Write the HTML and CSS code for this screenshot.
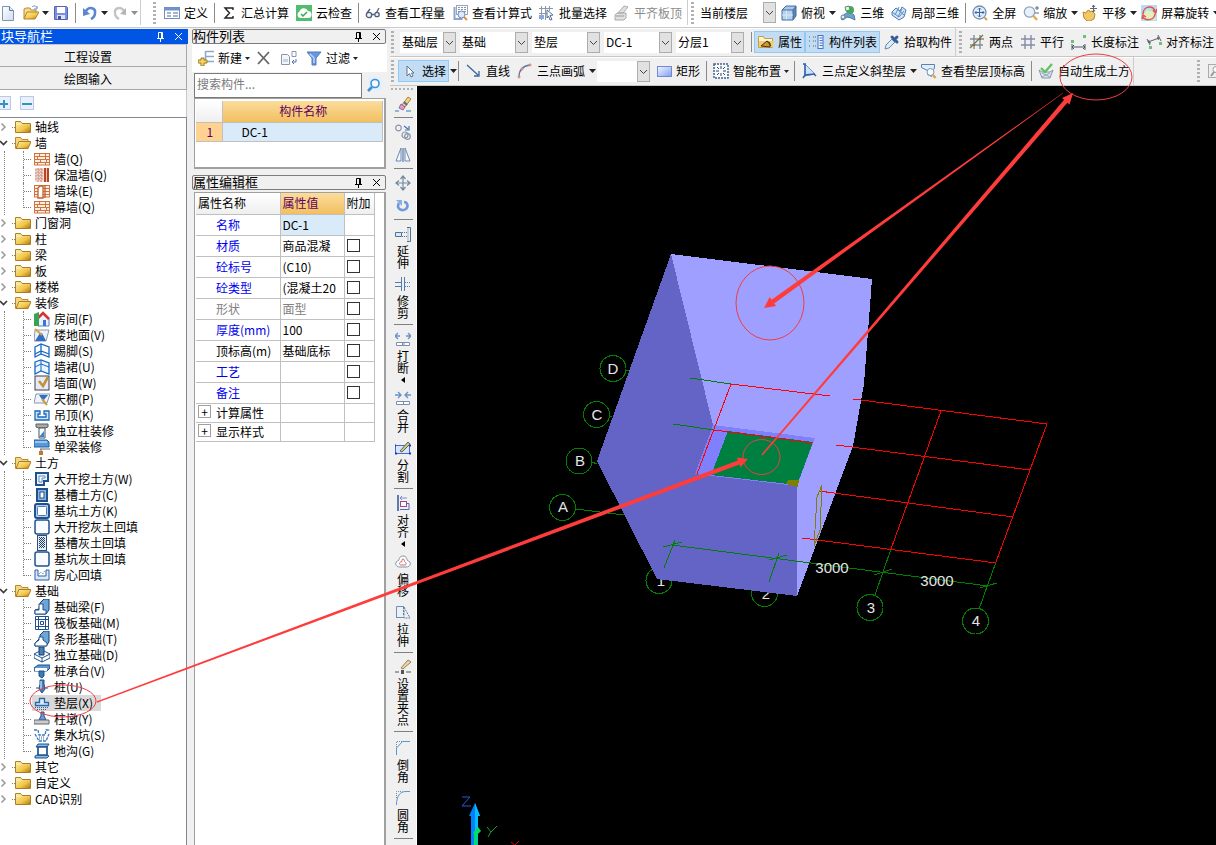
FILE: index.html
```html
<!DOCTYPE html>
<html lang="zh-CN">
<head>
<meta charset="utf-8">
<title>绘图输入</title>
<link rel="stylesheet" href="styles.css">
</head>
<body>
<svg class="sprite" aria-hidden="true">
  <defs>
    <linearGradient id="g-fold" x1="0" y1="0" x2="1" y2="1"><stop offset="0" stop-color="#fff0a8"/><stop offset=".6" stop-color="#f2c548"/><stop offset="1" stop-color="#a87410"/></linearGradient>
    <linearGradient id="g-blue" x1="0" y1="0" x2="1" y2="1"><stop offset="0" stop-color="#f4f8ff"/><stop offset="1" stop-color="#7f9ff0"/></linearGradient>
    <linearGradient id="g-page" x1="0" y1="0" x2="1" y2="1"><stop offset="0" stop-color="#fff"/><stop offset="1" stop-color="#cfdcf0"/></linearGradient>
  </defs>
  <symbol id="caret" viewBox="0 0 7 4"><path d="M0 0h7L3.500 4z" fill="#222"/></symbol>
  <symbol id="new" viewBox="0 0 16 16"><path d="M2.500 1.500h7l4 4v10h-11z" fill="url(#g-page)" stroke="#7d94b5"/><path d="M9.500 1.500v4h4" fill="#dce6f4" stroke="#5f7ba6"/></symbol>
  <symbol id="open" viewBox="0 0 16 16"><path d="M1 14V4l2-1h4l1 2h5v2" fill="#f5dc8c" stroke="#b98b2c"/><path d="M1 14l3-7h12l-4 7z" fill="url(#g-fold)" stroke="#b08428"/><path d="M9 2c2-2 4-1 5 1m0-2v3h-3" fill="none" stroke="#6d8fc4"/></symbol>
  <symbol id="save" viewBox="0 0 16 16"><path d="M1.500 1.500h12l1 1v12h-13z" fill="#7b8fe0" stroke="#5663b4"/><path d="M4 2h8v6H4z" fill="#fff"/><path d="M4 10h8v4H4z" fill="#dce4f8"/><path d="M5 11h3v3H5z" fill="#4552a0"/></symbol>
  <symbol id="undo" viewBox="0 0 16 16"><path d="M4 6C7 1 14 3 13 8c0 3-2 5-4 6" fill="none" stroke="#5c86cf" stroke-width="2.600"/><path d="M1 3v8l7-2z" fill="#5c86cf"/></symbol>
  <symbol id="redo" viewBox="0 0 16 16"><path d="M12 6C9 1 2 3 3 8c0 3 2 5 4 6" fill="none" stroke="#c4c4c4" stroke-width="2.400"/><path d="M14 3v7l-6-1z" fill="#b5b5b5"/></symbol>
  <symbol id="define" viewBox="0 0 16 16"><rect x=".5" y="2.500" width="15" height="11" fill="#fff" stroke="#6f8fc4"/><path d="M1 3h14v2.500H1z" fill="#6d93d6"/><path d="M3 8h4M3 11h4M9 8h5M9 11h5" stroke="#4f6791"/></symbol>
  <symbol id="sum" viewBox="0 0 16 16"><path d="M12 5V3H4l4.500 5L4 13h8v-2" fill="none" stroke="#222" stroke-width="1.400"/></symbol>
  <symbol id="cloud" viewBox="0 0 16 16"><rect width="16" height="16" fill="#52bd6c"/><path d="M4 13a3.500 3.500 0 0 1-.5-6.500A4.500 4.500 0 0 1 12 6a3.500 3.500 0 0 1 0 7z" fill="#fff"/><path d="M5 9l2 2 4-4" fill="none" stroke="#34a853" stroke-width="1.500"/></symbol>
  <symbol id="glasses" viewBox="0 0 16 16"><g fill="#eef2f8" stroke="#51607a" stroke-width="1.300"><circle cx="4" cy="10" r="2.700"/><circle cx="12" cy="9.500" r="2.200"/><path d="M6.500 9.500h3M2 8l3-4m6.500 3.500L14 3" fill="none"/></g></symbol>
  <symbol id="formula" viewBox="0 0 16 16"><rect x="4.500" y=".5" width="11" height="9" fill="#fff" stroke="#9aa3b8"/><path d="M6 2.500h8M6 4.500h8M6 6.500h8" stroke="#8593b0" stroke-dasharray="2 1"/><path d="M2.500 2v12h8" fill="none" stroke="#8ba2d4" stroke-width="2"/><circle cx="9.500" cy="9.500" r="3.500" fill="#dceaff" stroke="#7286ad"/><path d="M12 12l3 3" stroke="#d8953e" stroke-width="2"/></symbol>
  <symbol id="batch" viewBox="0 0 16 16"><path d="M0 3.500h14M0 8.500h11M2.500 1v14M6.500 1v14M10.500 1v5" stroke="#8c97ab"/><path d="M0 10h5v4H0z" fill="#8ba6dc"/><path d="M8 5l6 5-3 .5 2 4-2 .5-1.500-4L8 13z" fill="#fff" stroke="#506f9f"/></symbol>
  <symbol id="flat" viewBox="0 0 16 16"><path d="M1 10l2-2h9v5l-2 2H1zM4 8l6-7 4 1-5 6z" fill="#e0e0e0" stroke="#aaa"/><path d="M2 11h8" stroke="#999"/></symbol>
  <symbol id="cube" viewBox="0 0 16 16"><path d="M1 5l4-4h10l-3 4z" fill="#a7c6ec"/><path d="M1 5h11v10H1z" fill="#b8d3ee"/><path d="M12 5l3-4v10l-3 4z" fill="#5c86b8"/><path d="M1 5l4-4h10v10l-3 4H1zM1 5h11v10m0-10l3-4" fill="none" stroke="#416d9d"/><path d="M5.500 5.500v9M1 10h11" stroke="#d9e8f7"/></symbol>
  <symbol id="view3d" viewBox="0 0 16 16"><path d="M1 14c2-6 9-8 13-4l1 5-4-2-4-1-4 3z" fill="#6da2cf" stroke="#477aab"/><circle cx="10" cy="5" r="4" fill="#47a85b"/><path d="M5 2l4-1 1 4-4 1z" fill="#e4f2e8" stroke="#53916a"/><circle cx="3" cy="12" r="2" fill="#eee" stroke="#647fa3"/></symbol>
  <symbol id="part3d" viewBox="0 0 16 16"><path d="M1 7l4-4 4 3 2-4 4 3-2 7-5 3-7-5z" fill="#d4e6f8" stroke="#4a7bb0"/><path d="M4 10l4-8m-1 10l4-8M1 7l7 5 5-6M5 3l8 7" fill="none" stroke="#5f8fc3"/></symbol>
  <symbol id="full" viewBox="0 0 16 16"><circle cx="7.500" cy="7.500" r="6.500" fill="#e4edf8" stroke="#7990ae" stroke-width="1.300"/><path d="M7.500 3v9M3 7.500h9M6 4.500L7.500 3 9 4.500m-3 6L7.500 12 9 10.500M4.500 6L3 7.500 4.500 9m6-3L12 7.500 10.500 9" fill="none" stroke="#2f68ad"/><path d="M12.500 12.500L15 15" stroke="#d3a04a" stroke-width="2"/></symbol>
  <symbol id="zoomic" viewBox="0 0 16 16"><circle cx="6.500" cy="7" r="5.200" fill="#e8f0f8" stroke="#93a5bd" stroke-width="1.300"/><path d="M10.500 11l3.500 4" stroke="#e3ad45" stroke-width="2.400"/><path d="M12 3h4m-2-2v4m-2 3h4" stroke="#506d94"/></symbol>
  <symbol id="hand" viewBox="0 0 16 16"><path d="M1 7l3 1 1-2 2-1 1 2 2-1 3 3-1 5-4 2H5l-3-3z" fill="#f2c765" stroke="#b88c32"/><path d="M11.500 0v7M8 3.500h7M10 2l1.500-2L13 2m-3 4l1.500 1L13 5" fill="none" stroke="#5f6670"/></symbol>
  <symbol id="orbit" viewBox="0 0 16 16"><rect width="16" height="16" fill="#b6def0"/><path d="M1 12l5-7 6 2 3 8z" fill="#e5efba"/><path d="M2 9c0-9 12-9 12-2M14 9c-1 7-10 7-12 3M12 5l2.500 3L16 4M1 14l1-4 3 2" fill="none" stroke="#e6544a" stroke-width="1.500"/></symbol>
  <symbol id="props" viewBox="0 0 16 16"><path d="M.5 13.500v-11h5l1 2h8v9z" fill="#fff4cd" stroke="#c79e42"/><path d="M1 7h15l-1 6H1z" fill="#f0cf74"/><path d="M3 12l6-5 3 2v4zM9 7l4 5" fill="#d3962f" stroke="#3f3422"/></symbol>
  <symbol id="listic" viewBox="0 0 16 16"><path d="M0 3h2M4 3h3M0 7h2M4 7h3M0 12h2M4 12h3" stroke="#546277" stroke-dasharray="1 1"/><rect x="9" y="1.500" width="5" height="13" fill="#eef3ff" stroke="#4773c8"/><path d="M10.500 4h3M10.500 6.500h3M10.500 9h3M10.500 11.500h3" stroke="#4773c8"/></symbol>
  <symbol id="picker" viewBox="0 0 16 16"><path d="M1 15l1-4 6-6 3 3-6 6z" fill="#dcebfa" stroke="#678caf"/><path d="M8 3l5 5M10 6l3-3" stroke="#345f9a" stroke-width="3" stroke-linecap="round"/></symbol>
  <symbol id="twopt" viewBox="0 0 16 16"><path d="M1 5h14M1 11h13M5 1v14M11 1v14" stroke="#858b9b" stroke-width="1.400"/><path d="M1 14L14 1" stroke="#4f8d3c" stroke-width="1.200"/><path d="M4 10h2v2H4zm6-6h2v2h-2z" fill="#d24640"/></symbol>
  <symbol id="para" viewBox="0 0 16 16"><path d="M1 5h14M1 11h14M5 1v14M11 1v14" stroke="#858ba5" stroke-width="1.400"/></symbol>
  <symbol id="len" viewBox="0 0 16 16"><path d="M1 10v6m13-6v6M1 13h13M3 11l-2 2 2 2m9-4l2 2-2 2" fill="none" stroke="#4d5968"/><path d="M0 6h3v3H0zM12 1h3v3h-3z" fill="#6fc075"/></symbol>
  <symbol id="align" viewBox="0 0 16 16"><path d="M1 5l3 6M12 1l3 6M2 8l11-4M3 6L2 8l3 1m6-6l2 1-1 2" fill="none" stroke="#58616f"/><path d="M3 12h3v3H3zM13 8h3v3h-3z" fill="#6fc075"/></symbol>
  <symbol id="cursor" viewBox="0 0 16 16"><path d="M5 3v10l2.500-2.500L9 14l2-1-1.500-3H12z" fill="#fff" stroke="#5a7390"/></symbol>
  <symbol id="line" viewBox="0 0 16 16"><path d="M1 2l11 10M13 8v5H8" fill="none" stroke="#3b6797" stroke-width="1.300"/></symbol>
  <symbol id="arc" viewBox="0 0 16 16"><path d="M2 14C2 7 5 3 13 2" fill="none" stroke="#627b9e" stroke-width="1.300"/><g fill="#fff" stroke="#d4705f"><circle cx="2" cy="14" r="1"/><circle cx="5" cy="6" r="1"/><circle cx="13" cy="2" r="1"/></g></symbol>
  <symbol id="rect" viewBox="0 0 16 16"><rect x="1.500" y="3.500" width="14" height="10" fill="url(#g-blue)" stroke="#7189d5"/></symbol>
  <symbol id="smart" viewBox="0 0 16 16"><rect x="1" y="1" width="14" height="14" fill="#f7faff" stroke="#44638c" stroke-width="1.500" stroke-dasharray="2 1"/><path d="M8 3v3M8 10v3M3 8h3M10 8h3M4 4l2 2m4 4l2 2M12 4l-2 2m-4 4l-2 2" stroke="#33455f"/></symbol>
  <symbol id="slope" viewBox="0 0 16 16"><path d="M3 1v12l10-2z" fill="#cfe2fb" stroke="#6f97cf"/><path d="M1 1h3M3 1v12M1 15l2-3 9-1 2 2" fill="none" stroke="#3161a8" stroke-width="1.500"/></symbol>
  <symbol id="lookup" viewBox="0 0 16 16"><path d="M.5 1.500h13v4l-3 2v6l-4-2v-4l-6-3z" fill="#e0edfa" stroke="#5a81b1"/><circle cx="9.500" cy="9" r="3.500" fill="#f4faff" stroke="#8098b5"/><path d="M12 12l2.500 3" stroke="#e0a443" stroke-width="2.400"/></symbol>
  <symbol id="auto" viewBox="0 0 16 16"><path d="M1 7l3 8h8l3-8-3 2H4z" fill="#dbe5ee" stroke="#8297ab"/><path d="M4 10l8 4M12 10l-8 4" stroke="#96a7b6"/><path d="M3 5l4 4 7-8" fill="none" stroke="#5fc05e" stroke-width="2.200"/></symbol>
  <symbol id="ghost" viewBox="0 0 16 16"><rect x=".5" y="1.500" width="15" height="13" fill="#eee" stroke="#aaa"/><circle cx="8" cy="6.500" r="3" fill="#fff" stroke="#999"/><path d="M6 9l-3 4" stroke="#999" stroke-width="2"/></symbol>
  <symbol id="addrow" viewBox="0 0 16 16"><path d="M7.500 1v12M8 1.500h8M8 6.500h8M8 11.500h8" stroke="#8ea7c4" stroke-width="1.500"/><path d="M3 8h3v2h3v3H6v3H3v-3H0v-3h3z" fill="#f4d35f" stroke="#9c7a28"/></symbol>
  <symbol id="del" viewBox="0 0 16 16"><path d="M2 2l11 12M13 2L2 14" stroke="#666" stroke-width="1.800"/></symbol>
  <symbol id="copyrow" viewBox="0 0 16 16"><path d="M.5 4.500h6l2 2v8h-8z" fill="#f4f6fa" stroke="#8996ad"/><path d="M2 9h5v3H2z" fill="#c7d3e8"/><path d="M11 1.500h4v5h-4z" fill="#fff" stroke="#8996ad"/><path d="M15 9v3h-4m2-2l-2 2 2 2" fill="none" stroke="#5870b8"/></symbol>
  <symbol id="funnel" viewBox="0 0 16 16"><path d="M1 2h14L10 8v7H6V8z" fill="#6698dc" stroke="#5078bd"/><path d="M4 4l4 4v5" fill="none" stroke="#b9d5ff" stroke-width="1.500"/></symbol>
  <symbol id="find" viewBox="0 0 16 16"><rect x="2" width="14" height="14" fill="#e2f1fd"/><circle cx="9" cy="6.500" r="4" fill="#f4faff" stroke="#3e91d4" stroke-width="1.600"/><path d="M6 10l-4 4" stroke="#3e91d4" stroke-width="2.600"/></symbol>
  <symbol id="pin" viewBox="0 0 9 10"><path d="M2.500 6V.5h4V6M5.500 1v5M1 6.500h7M4.500 7v3" fill="none" stroke="currentColor"/></symbol>
  <symbol id="x" viewBox="0 0 9 9"><path d="M1 1l7 7M8 1L1 8" stroke="currentColor"/></symbol>
  <symbol id="plus" viewBox="0 0 14 14"><rect x=".5" y=".5" width="13" height="13" fill="#e9effb" stroke="#b9c7eb"/><path d="M7 4v8M3 8h8" stroke="#3292c3" stroke-width="2"/></symbol>
  <symbol id="minus" viewBox="0 0 14 14"><rect x=".5" y=".5" width="13" height="13" fill="#e9effb" stroke="#b9c7eb"/><path d="M2 8h10" stroke="#3292c3" stroke-width="2"/></symbol>
  <symbol id="shut" viewBox="0 0 8 10"><path d="M1.500 1.500L5 5 1.500 8.500" fill="none" stroke="#9b9b9b" stroke-width="1.600"/></symbol>
  <symbol id="down" viewBox="0 0 8 10"><path d="M0 3l3.500 3.500L7 3" fill="none" stroke="#3c3c3c" stroke-width="1.700"/></symbol>
  <symbol id="folder" viewBox="0 0 16 16"><path d="M.5 13.500v-11h5l1.500 2h8.500v9z" fill="url(#g-fold)" stroke="#a98028"/><path d="M1 5h6" stroke="#fff3bd"/></symbol>
  <symbol id="folderopen" viewBox="0 0 16 16"><path d="M.5 13.500v-11h5l1.500 2h6v3" fill="#f4d77c" stroke="#b8892a"/><path d="M1 13.500l3-7h12l-3 7z" fill="url(#g-fold)" stroke="#a97d25"/></symbol>
  <symbol id="brick" viewBox="0 0 16 16"><path d="M0 2h16v12H0z" fill="#fdeee2"/><path d="M0 2.500h16M0 5.500h16M0 8.500h16M0 11.500h16M0 14h16M5.500 2v3m6-3v3M3.500 6v3m8-3v3M6.500 9v3m6-3v3M3.500 12v2m8-2v2M.5 2v12M15.500 2v12" stroke="#cf7440"/></symbol>
  <symbol id="brick2" viewBox="0 0 16 16"><path d="M1 1h9v14H1z" fill="#f7dcd0"/><path d="M1 3h9M1 6h9M1 9h9M1 12h9M4 1v14M7 1v14" stroke="#c08478" stroke-dasharray="2 1"/><path d="M10 1h5v14h-5z" fill="#b3462a"/><path d="M12.500 1v14" stroke="#ffc09c"/></symbol>
  <symbol id="brick3" viewBox="0 0 16 16"><path d="M0 2h16v12H0z" fill="#fdeee2"/><path d="M0 2.500h16M0 5.500h16M0 8.500h16M0 11.500h16M0 14h16M.5 2v12M15.500 2v12" stroke="#cf7440"/><path d="M4 15V5l2-2h3v12zM11 2v13" fill="#fff" stroke="#c35d28" stroke-width="1.300"/></symbol>
  <symbol id="room" viewBox="0 0 16 16"><path d="M4 15V7l5-4 6 4v8z" fill="#eaf2ff" stroke="#5d7ebc"/><path d="M4 7l5-5 6 6" fill="none" stroke="#d8322a" stroke-width="2.600"/><path d="M0 3l5-2v14H0z" fill="#35a454"/><path d="M9 9h3v6H9z" fill="#4172d4"/></symbol>
  <symbol id="floor" viewBox="0 0 16 16"><path d="M1 3h14l-3 11H0z" fill="#eef3fb" stroke="#8a96ab"/><path d="M6 6h2l4 8H1z" fill="#2f6ec4"/><path d="M1 2l7 6" stroke="#d5a33e" stroke-width="2"/></symbol>
  <symbol id="skirt" viewBox="0 0 16 16"><path d="M1 4l6-3 8 3v10l-8-3-6 3z" fill="#fff" stroke="#1767c4" stroke-width="1.300"/><path d="M7 1v10M1 11l6-3 8 3" fill="none" stroke="#1767c4" stroke-width="1.300"/></symbol>
  <symbol id="wains" viewBox="0 0 16 16"><path d="M1 3l6-2 8 3v11l-8-3-6 3z" fill="#eaf5ff" stroke="#1767c4" stroke-width="1.300"/><path d="M1 8l6-3 8 3M7 1v11" fill="none" stroke="#1767c4"/></symbol>
  <symbol id="wallface" viewBox="0 0 16 16"><rect x="1" y="1" width="14" height="14" fill="#e9ebf4" stroke="#3e3e4a"/><path d="M5 6l4 5 5-9" fill="none" stroke="#bd9340" stroke-width="2.600"/></symbol>
  <symbol id="ceil" viewBox="0 0 16 16"><path d="M2 3h14l-3 9H0z" fill="#edf4ff" stroke="#8a96ab"/><path d="M5 4h9l-5 6z" fill="#2f6ec4"/><path d="M8 8l5 6" stroke="#ce9a3b" stroke-width="2"/></symbol>
  <symbol id="hang" viewBox="0 0 16 16"><path d="M1 4h5v3H4v3h8V7h-2V4h5v9H1z" fill="#cfe4fa" stroke="#1767b9" stroke-width="1.300"/></symbol>
  <symbol id="coldeco" viewBox="0 0 16 16"><path d="M2 1h12v3l-3 1H5L2 4z" fill="#aaa" stroke="#5d5d62"/><path d="M5 5h6v10H5z" fill="#fff" stroke="#46556d"/><path d="M5 14l5-6v6z" fill="#3b7fce"/></symbol>
  <symbol id="beamdeco" viewBox="0 0 16 16"><path d="M0 1h13l2 2v5H0z" fill="#5798da" stroke="#1e5e9f"/><path d="M1 3h12" stroke="#e2f2ff"/><path d="M6 10h10M7 10v3" stroke="#667"/><rect x="5" y="12" width="4" height="4" fill="#c1792e"/></symbol>
  <symbol id="dig" viewBox="0 0 16 16"><path d="M2 2h12v8h-4v4H2z" fill="#e7f0fb" stroke="#1e518e" stroke-width="2"/><path d="M5 5h6v2H8v4H5z" fill="#fff" stroke="#5f8cc0"/></symbol>
  <symbol id="trench" viewBox="0 0 16 16"><rect x="3" y="2" width="10" height="12" fill="#8db5df" stroke="#1e518e" stroke-width="2"/><rect x="6" y="5" width="4" height="6" fill="#fff" stroke="#1e518e"/></symbol>
  <symbol id="pit" viewBox="0 0 16 16"><rect x="1" y="1" width="14" height="14" rx="2" fill="#b3cff1" stroke="#1e518e" stroke-width="2"/><rect x="3.500" y="3.500" width="9" height="9" rx="1" fill="#fff" stroke="#477db7"/></symbol>
  <symbol id="fill" viewBox="0 0 16 16"><rect x="1" y="1" width="14" height="14" rx="2" fill="#f8fbff" stroke="#1e518e" stroke-width="1.500"/></symbol>
  <symbol id="fill2" viewBox="0 0 16 16"><rect x="3.500" y=".5" width="9" height="15" fill="#e1edfb" stroke="#334e70"/><path d="M5 2.500h6M5 4.500h6M5 6.500h6M5 8.500h6M5 10.500h6M5 12.500h6" stroke="#243d5c" stroke-dasharray="1 1"/><path d="M6 3.500h6M6 5.500h6M6 7.500h6M6 9.500h6M6 11.500h6" stroke="#243d5c" stroke-dasharray="1 1"/></symbol>
  <symbol id="heart" viewBox="0 0 16 16"><path d="M1 3v10h14V3h-3v6H4V3z" fill="#dce8fa" stroke="#2d61a6"/><path d="M5 7l2-2 2 2 2-4" fill="none" stroke="#5d82c2" stroke-dasharray="1 1"/></symbol>
  <symbol id="fbeam" viewBox="0 0 16 16"><path d="M1 15v-4l4-1 1-6 4-4h5v11l-3 4z" fill="#6ea5d8" stroke="#153f71"/><path d="M1 15v-4h4V5h4v6h3v4z" fill="#fff" stroke="#1e518e"/></symbol>
  <symbol id="raft" viewBox="0 0 16 16"><path d="M1.500 1.500h13v13h-13z" fill="#fff" stroke="#1e518e"/><path d="M4.500 1v14M11.500 1v14M1 4.500h14M1 11.500h14" stroke="#1e518e"/><path d="M6.500 6.500h3v3h-3z" fill="#fff" stroke="#1e518e"/></symbol>
  <symbol id="strip" viewBox="0 0 16 16"><path d="M1 15v-3l5-5V4l4-4h5v11l-3 4z" fill="#6ea5d8" stroke="#153f71"/><path d="M1 15v-3l4-3V6h4v3l4 3v3z" fill="#fff" stroke="#1e518e"/></symbol>
  <symbol id="single" viewBox="0 0 16 16"><path d="M0 7l6-3h4l6 3v4l-8 4-8-4z" fill="#fff" stroke="#1e518e"/><path d="M0 7l8 4 8-4M8 11v4" fill="none" stroke="#1e518e"/><path d="M5 0h5v8H5z" fill="#487fb6" stroke="#153f71"/></symbol>
  <symbol id="cap" viewBox="0 0 16 16"><path d="M0 5l4-3h12v3l-3 3H0z" fill="#5a96d0" stroke="#1e518e"/><path d="M1 5h12v3H1z" fill="#fff"/><path d="M5 8h5v5l-2 2-3-2z" fill="#367ab9" stroke="#1e518e"/></symbol>
  <symbol id="pile" viewBox="0 0 16 16"><path d="M6 1h4v4l1 5-3 4-3-4 1-5z" fill="#427fb9" stroke="#1e518e"/><path d="M7 2v8" stroke="#fff"/><path d="M2 9h3m6 0h3" stroke="#1e518e"/></symbol>
  <symbol id="pad" viewBox="0 0 16 16"><path d="M5.500 3.500h5v4h4v3h-13v-3h4z" fill="#dce9fa" stroke="#2667aa" stroke-width="1.300"/><path d="M1 12.500h14M3 14.500h10" stroke="#365e94" stroke-dasharray="1 1"/></symbol>
  <symbol id="pier" viewBox="0 0 16 16"><path d="M7 1h3v4l2 4H5l2-4z" fill="#6d9ed2" stroke="#1e518e"/><path d="M0 9h15v4H0z" fill="#ccc" stroke="#606a78"/></symbol>
  <symbol id="sump" viewBox="0 0 16 16"><path d="M0 3h4l1 5h6l1-5h4M1 7l4 7h7l3-7" fill="none" stroke="#3d79bd" stroke-dasharray="3 1" stroke-width="1.300"/><path d="M5 10h6M5 12h6" stroke="#416c9e" stroke-dasharray="1 1"/></symbol>
  <symbol id="gutter" viewBox="0 0 16 16"><path d="M2 4l2-3h11l-2 3zm-1 9l2-1h10l2 1-2 2H1z" fill="#8eb9e3" stroke="#1e518e"/><path d="M4 4h9v8H4z" fill="#fff" stroke="#1e518e" stroke-width="1.700"/></symbol>
  <symbol id="erase" viewBox="0 0 16 16"><path d="M7 9l6-8 3 2-6 8z" fill="#f3d079" stroke="#a9853b"/><path d="M6 8l4 3-2 3-4-2z" fill="#e79cc4" stroke="#8b6aa0"/><path d="M9 6l3 3" stroke="#55699e" stroke-width="2"/><path d="M0 15h4m7 0h5" stroke="#3a79ae"/></symbol>
  <symbol id="dup" viewBox="0 0 16 16"><g fill="none" stroke="#8a97aa" stroke-width="1.200"><circle cx="3.500" cy="4" r="2.800"/><circle cx="10" cy="11" r="3"/><circle cx="12.500" cy="12.500" r="2.800"/><path d="M9 2l4 3m1-3v4h-4" stroke="#4376b4"/></g></symbol>
  <symbol id="mirror" viewBox="0 0 16 16"><path d="M6 1v13H1zM10 1v13h5z" fill="#f4f8ff" stroke="#6c8bb1"/><path d="M8 1v14" stroke="#3b65a0"/></symbol>
  <symbol id="move" viewBox="0 0 16 16"><path d="M8 1v14M1 8h14M5.500 4L8 1l2.500 3m-5 8L8 15l2.500-3M4 5.500L1 8l3 2.500m8-5L15 8l-3 2.500" fill="none" stroke="#73899e" stroke-width="1.200"/></symbol>
  <symbol id="rotate" viewBox="0 0 16 16"><path d="M4 5c-3 5 2 9 7 6 3-3 1-7-2-7" fill="none" stroke="#7198da" stroke-width="2.600"/><path d="M1 2h6v6z" fill="#8aaee6"/></symbol>
  <symbol id="extend" viewBox="0 0 16 16"><path d="M.5 6.500h6v4h-6z" fill="#dceaf7" stroke="#47769f"/><path d="M7 6.500h5M7 10.500h5" stroke="#54718b" stroke-dasharray="1 1"/><path d="M12 1.500h3.500v14H12" fill="none" stroke="#54718b"/><path d="M13 2v13" stroke="#9db8d0"/></symbol>
  <symbol id="trim" viewBox="0 0 16 16"><path d="M0 6.500h6M0 10.500h6M6.500 1v14M9.500 1v14" fill="none" stroke="#527eaa"/><path d="M10 6.500h6M10 10.500h6" stroke="#527eaa" stroke-dasharray="1 1"/></symbol>
  <symbol id="break" viewBox="0 0 16 16"><path d="M0 5h5m6 0h5M3 2L0 5l3 3m10-6l3 3-3 3" fill="none" stroke="#6a93cc" stroke-width="1.400"/><path d="M1.500 11.500h13v3h-13zM7.500 11v3M9 11v3" fill="#fff" stroke="#7a8fae"/></symbol>
  <symbol id="merge" viewBox="0 0 16 16"><path d="M0 5h6m4 0h6M3 2l3 3-3 3m10-6l-3 3 3 3" fill="none" stroke="#6a93cc" stroke-width="1.400"/><path d="M1.500 11.500h13v3h-13zM8.500 11v3" fill="#fff" stroke="#7a8fae"/></symbol>
  <symbol id="split" viewBox="0 0 16 16"><path d="M.5 5.500h14v8H.5z" fill="#d8e5ff" stroke="#4669d4"/><path d="M0 5.500h1M14 5.500h2M0 13.500h2M14 13.500h2" stroke="#2038d0" stroke-width="2"/><path d="M5 11l8-9 2 2-8 8z" fill="#d7c37c" stroke="#506c51"/></symbol>
  <symbol id="alignv" viewBox="0 0 16 16"><path d="M3 0v16" stroke="#6079b5" stroke-width="2"/><path d="M5 3h7M7 1L5 3l2 2" fill="none" stroke="#7a8cc8"/><rect x="5.500" y="6.500" width="6" height="5" fill="#fff" stroke="#a34883"/><path d="M5 14.500h9v-6h-2" fill="none" stroke="#516bc5"/></symbol>
  <symbol id="offset" viewBox="0 0 16 16"><path d="M8 2c4 0 4 4 4 4 5 2 4 7-1 7H5C0 13-1 8 4 6c0 0 0-4 4-4z" fill="#fff" stroke="#7b96b2"/><path d="M8 5c2 0 1 3 2 3s2 3 0 3H6c-2 0-2-3 0-3s0-3 2-3z" fill="none" stroke="#d56862"/></symbol>
  <symbol id="stretch" viewBox="0 0 16 16"><path d="M1.500 14V2.500H9M1 13.500h8" fill="none" stroke="#6b91bb"/><path d="M9 3l6 11H9zM8.500 3v9" fill="none" stroke="#587aac" stroke-dasharray="2 1"/></symbol>
  <symbol id="grippt" viewBox="0 0 16 16"><path d="M6 9l7-8 3 2-8 7z" fill="#ead6a3" stroke="#987f52"/><path d="M0 13h4m7 0h5" stroke="#555"/><rect x="6" y="11" width="3" height="4" fill="#555"/></symbol>
  <symbol id="chamfer" viewBox="0 0 16 16"><path d="M1.500 15V8l6-6.500H15" fill="none" stroke="#5799cf"/><path d="M1.500 7V1.500h6" fill="none" stroke="#888" stroke-dasharray="1 1"/></symbol>
  <symbol id="fillet" viewBox="0 0 16 16"><path d="M1.500 15C1.500 6 5 1.500 11 1.500h4" fill="none" stroke="#5799cf"/><path d="M1.500 8V1.500h6" fill="none" stroke="#888" stroke-dasharray="1 1"/></symbol>
</svg>

<header class="bar bar-main">
  <div class="group group-end">
    <button class="tool tool-first" aria-label="新建文件"><svg class="ic"><use href="#new"/></svg></button>
    <button class="tool tool-menu" aria-label="打开"><svg class="ic"><use href="#open"/></svg><svg class="caret caret-tight"><use href="#caret"/></svg></button>
    <button class="tool" aria-label="保存"><svg class="ic"><use href="#save"/></svg></button>
    <span class="sep"></span>
    <button class="tool tool-menu" aria-label="撤销"><svg class="ic"><use href="#undo"/></svg><svg class="caret caret-tight"><use href="#caret"/></svg></button>
    <button class="tool tool-menu" aria-label="恢复"><svg class="ic"><use href="#redo"/></svg><svg class="caret caret-tight faded"><use href="#caret"/></svg></button>
  </div>
  <div class="group group-end group-far">
    <span class="grip"></span>
    <button class="tool"><svg class="ic"><use href="#define"/></svg>定义</button>
    <span class="sep"></span>
    <button class="tool"><svg class="ic"><use href="#sum"/></svg>汇总计算</button>
    <button class="tool"><svg class="ic"><use href="#cloud"/></svg>云检查</button>
    <span class="sep"></span>
    <button class="tool"><svg class="ic"><use href="#glasses"/></svg>查看工程量</button>
    <button class="tool"><svg class="ic"><use href="#formula"/></svg>查看计算式</button>
    <button class="tool"><svg class="ic"><use href="#batch"/></svg>批量选择</button>
    <button class="tool" disabled><svg class="ic"><use href="#flat"/></svg>平齐板顶</button>
  </div>
  <div class="group">
    <span class="grip grip-near"></span>
    <select class="combo combo-wide" aria-label="楼层"><option>当前楼层</option></select>
    <button class="tool tool-menu"><svg class="ic"><use href="#cube"/></svg>俯视<svg class="caret"><use href="#caret"/></svg></button>
    <button class="tool"><svg class="ic"><use href="#view3d"/></svg>三维</button>
    <button class="tool"><svg class="ic"><use href="#part3d"/></svg>局部三维</button>
    <span class="sep"></span>
    <button class="tool"><svg class="ic"><use href="#full"/></svg>全屏</button>
    <button class="tool tool-menu"><svg class="ic"><use href="#zoomic"/></svg>缩放<svg class="caret"><use href="#caret"/></svg></button>
    <button class="tool tool-menu"><svg class="ic"><use href="#hand"/></svg>平移<svg class="caret"><use href="#caret"/></svg></button>
    <button class="tool tool-menu"><svg class="ic"><use href="#orbit"/></svg>屏幕旋转<svg class="caret"><use href="#caret"/></svg></button>
  </div>
</header>

<div class="work">
  <aside class="nav">
    <h2 class="title title-active"><span>块导航栏</span><button aria-label="固定"><svg class="pin"><use href="#pin"/></svg></button><button aria-label="关闭"><svg class="close"><use href="#x"/></svg></button></h2>
    <button class="stack">工程设置</button>
    <button class="stack">绘图输入</button>
    <div class="fold"><button aria-label="展开"><svg><use href="#plus"/></svg></button><button aria-label="折叠"><svg><use href="#minus"/></svg></button></div>
    <ul class="tree">
      <li><a href="#"><svg class="arrow"><use href="#shut"/></svg><i class="dots"></i><svg class="ic"><use href="#folder"/></svg>轴线</a></li>
      <li><a href="#"><svg class="arrow"><use href="#down"/></svg><i class="dots"></i><svg class="ic"><use href="#folderopen"/></svg>墙</a>
        <ul>
          <li><i class="branch"></i><a href="#"><svg class="ic"><use href="#brick"/></svg>墙(Q)</a></li>
          <li><i class="branch"></i><a href="#"><svg class="ic"><use href="#brick2"/></svg>保温墙(Q)</a></li>
          <li><i class="branch"></i><a href="#"><svg class="ic"><use href="#brick3"/></svg>墙垛(E)</a></li>
          <li><i class="branch"></i><a href="#"><svg class="ic"><use href="#brick"/></svg>幕墙(Q)</a></li>
        </ul>
      </li>
      <li><a href="#"><svg class="arrow"><use href="#shut"/></svg><i class="dots"></i><svg class="ic"><use href="#folder"/></svg>门窗洞</a></li>
      <li><a href="#"><svg class="arrow"><use href="#shut"/></svg><i class="dots"></i><svg class="ic"><use href="#folder"/></svg>柱</a></li>
      <li><a href="#"><svg class="arrow"><use href="#shut"/></svg><i class="dots"></i><svg class="ic"><use href="#folder"/></svg>梁</a></li>
      <li><a href="#"><svg class="arrow"><use href="#shut"/></svg><i class="dots"></i><svg class="ic"><use href="#folder"/></svg>板</a></li>
      <li><a href="#"><svg class="arrow"><use href="#shut"/></svg><i class="dots"></i><svg class="ic"><use href="#folder"/></svg>楼梯</a></li>
      <li><a href="#"><svg class="arrow"><use href="#down"/></svg><i class="dots"></i><svg class="ic"><use href="#folderopen"/></svg>装修</a>
        <ul>
          <li><i class="branch"></i><a href="#"><svg class="ic"><use href="#room"/></svg>房间(F)</a></li>
          <li><i class="branch"></i><a href="#"><svg class="ic"><use href="#floor"/></svg>楼地面(V)</a></li>
          <li><i class="branch"></i><a href="#"><svg class="ic"><use href="#skirt"/></svg>踢脚(S)</a></li>
          <li><i class="branch"></i><a href="#"><svg class="ic"><use href="#wains"/></svg>墙裙(U)</a></li>
          <li><i class="branch"></i><a href="#"><svg class="ic"><use href="#wallface"/></svg>墙面(W)</a></li>
          <li><i class="branch"></i><a href="#"><svg class="ic"><use href="#ceil"/></svg>天棚(P)</a></li>
          <li><i class="branch"></i><a href="#"><svg class="ic"><use href="#hang"/></svg>吊顶(K)</a></li>
          <li><i class="branch"></i><a href="#"><svg class="ic"><use href="#coldeco"/></svg>独立柱装修</a></li>
          <li><i class="branch"></i><a href="#"><svg class="ic"><use href="#beamdeco"/></svg>单梁装修</a></li>
        </ul>
      </li>
      <li><a href="#"><svg class="arrow"><use href="#down"/></svg><i class="dots"></i><svg class="ic"><use href="#folderopen"/></svg>土方</a>
        <ul>
          <li><i class="branch"></i><a href="#"><svg class="ic"><use href="#dig"/></svg>大开挖土方(W)</a></li>
          <li><i class="branch"></i><a href="#"><svg class="ic"><use href="#trench"/></svg>基槽土方(C)</a></li>
          <li><i class="branch"></i><a href="#"><svg class="ic"><use href="#pit"/></svg>基坑土方(K)</a></li>
          <li><i class="branch"></i><a href="#"><svg class="ic"><use href="#fill"/></svg>大开挖灰土回填</a></li>
          <li><i class="branch"></i><a href="#"><svg class="ic"><use href="#fill2"/></svg>基槽灰土回填</a></li>
          <li><i class="branch"></i><a href="#"><svg class="ic"><use href="#fill"/></svg>基坑灰土回填</a></li>
          <li><i class="branch"></i><a href="#"><svg class="ic"><use href="#heart"/></svg>房心回填</a></li>
        </ul>
      </li>
      <li><a href="#"><svg class="arrow"><use href="#down"/></svg><i class="dots"></i><svg class="ic"><use href="#folderopen"/></svg>基础</a>
        <ul>
          <li><i class="branch"></i><a href="#"><svg class="ic"><use href="#fbeam"/></svg>基础梁(F)</a></li>
          <li><i class="branch"></i><a href="#"><svg class="ic"><use href="#raft"/></svg>筏板基础(M)</a></li>
          <li><i class="branch"></i><a href="#"><svg class="ic"><use href="#strip"/></svg>条形基础(T)</a></li>
          <li><i class="branch"></i><a href="#"><svg class="ic"><use href="#single"/></svg>独立基础(D)</a></li>
          <li><i class="branch"></i><a href="#"><svg class="ic"><use href="#cap"/></svg>桩承台(V)</a></li>
          <li><i class="branch"></i><a href="#"><svg class="ic"><use href="#pile"/></svg>桩(U)</a></li>
          <li><i class="branch"></i><a href="#" class="current"><svg class="ic"><use href="#pad"/></svg>垫层(X)</a></li>
          <li><i class="branch"></i><a href="#"><svg class="ic"><use href="#pier"/></svg>柱墩(Y)</a></li>
          <li><i class="branch"></i><a href="#"><svg class="ic"><use href="#sump"/></svg>集水坑(S)</a></li>
          <li><i class="branch"></i><a href="#"><svg class="ic"><use href="#gutter"/></svg>地沟(G)</a></li>
        </ul>
      </li>
      <li><a href="#"><svg class="arrow"><use href="#shut"/></svg><i class="dots"></i><svg class="ic"><use href="#folder"/></svg>其它</a></li>
      <li><a href="#"><svg class="arrow"><use href="#shut"/></svg><i class="dots"></i><svg class="ic"><use href="#folder"/></svg>自定义</a></li>
      <li><a href="#"><svg class="arrow"><use href="#shut"/></svg><i class="dots"></i><svg class="ic"><use href="#folder"/></svg>CAD识别</a></li>
    </ul>
  </aside>

  <aside class="side">
    <h2 class="title"><span>构件列表</span><button aria-label="固定"><svg class="pin"><use href="#pin"/></svg></button><button aria-label="关闭"><svg class="close"><use href="#x"/></svg></button></h2>
    <div class="list-tools">
      <button class="tool tool-menu"><svg class="ic"><use href="#addrow"/></svg>新建<svg class="caret caret-small"><use href="#caret"/></svg></button>
      <button class="tool" aria-label="删除"><svg class="ic"><use href="#del"/></svg></button>
      <button class="tool" aria-label="复制"><svg class="ic"><use href="#copyrow"/></svg></button>
      <button class="tool tool-menu"><svg class="ic"><use href="#funnel"/></svg>过滤<svg class="caret caret-small"><use href="#caret"/></svg></button>
    </div>
    <div class="search"><input type="text" placeholder="搜索构件..." aria-label="搜索构件"><button aria-label="搜索"><svg class="ic"><use href="#find"/></svg></button></div>
    <div class="box box-list">
      <table class="parts">
        <tr><th class="corner"></th><th class="hot">构件名称</th></tr>
        <tr><td class="num">1</td><td class="picked">DC-1</td></tr>
      </table>
    </div>
    <h2 class="title title-second"><span>属性编辑框</span><button aria-label="固定"><svg class="pin"><use href="#pin"/></svg></button><button aria-label="关闭"><svg class="close"><use href="#x"/></svg></button></h2>
    <div class="box box-props">
      <table class="props">
        <tr><th class="c1">属性名称</th><th class="c2 hot">属性值</th><th class="c3">附加</th></tr>
        <tr><td class="key">名称</td><td class="picked">DC-1</td><td></td></tr>
        <tr><td class="key">材质</td><td>商品混凝</td><td><input type="checkbox" aria-label="附加材质"></td></tr>
        <tr><td class="key">砼标号</td><td>(C10)</td><td><input type="checkbox" aria-label="附加砼标号"></td></tr>
        <tr><td class="key">砼类型</td><td>(混凝土20</td><td><input type="checkbox" aria-label="附加砼类型"></td></tr>
        <tr><td class="key dim">形状</td><td class="dim">面型</td><td><input type="checkbox" aria-label="附加形状"></td></tr>
        <tr><td class="key">厚度(mm)</td><td>100</td><td><input type="checkbox" aria-label="附加厚度"></td></tr>
        <tr><td class="key plain">顶标高(m)</td><td>基础底标</td><td><input type="checkbox" aria-label="附加顶标高"></td></tr>
        <tr><td class="key">工艺</td><td></td><td><input type="checkbox" aria-label="附加工艺"></td></tr>
        <tr><td class="key">备注</td><td></td><td><input type="checkbox" aria-label="附加备注"></td></tr>
        <tr class="sum"><td class="more"><button>+</button>计算属性</td><td></td><td></td></tr>
        <tr class="sum"><td class="more"><button>+</button>显示样式</td><td></td><td></td></tr>
      </table>
    </div>
  </aside>

  <main class="main">
    <div class="bar bar-sub">
      <div class="group group-end">
        <span class="grip"></span>
        <select class="combo combo-short" aria-label="楼层"><option>基础层</option></select>
        <select class="combo" aria-label="类别"><option>基础</option></select>
        <select class="combo" aria-label="类型"><option>垫层</option></select>
        <select class="combo" aria-label="构件"><option>DC-1</option></select>
        <select class="combo" aria-label="分层"><option>分层1</option></select>
        <span class="sep"></span>
        <button class="tool on"><svg class="ic"><use href="#props"/></svg>属性</button>
        <button class="tool on"><svg class="ic"><use href="#listic"/></svg>构件列表</button>
        <button class="tool"><svg class="ic"><use href="#picker"/></svg>拾取构件</button>
      </div>
      <div class="group">
        <span class="grip grip-near"></span>
        <button class="tool"><svg class="ic"><use href="#twopt"/></svg>两点</button>
        <button class="tool"><svg class="ic"><use href="#para"/></svg>平行</button>
        <button class="tool"><svg class="ic"><use href="#len"/></svg>长度标注</button>
        <button class="tool"><svg class="ic"><use href="#align"/></svg>对齐标注</button>
      </div>
    </div>
    <div class="bar bar-sub">
      <div class="group group-end">
        <span class="grip"></span>
        <button class="tool on"><svg class="ic"><use href="#cursor"/></svg>选择</button><svg class="caret caret-flush"><use href="#caret"/></svg>
        <span class="sep sep-flush"></span>
        <button class="tool"><svg class="ic"><use href="#line"/></svg>直线</button>
        <button class="tool tool-menu"><svg class="ic"><use href="#arc"/></svg>三点画弧<svg class="caret"><use href="#caret"/></svg></button>
        <select class="combo combo-blank" aria-label="半径"><option></option></select>
        <button class="tool"><svg class="ic"><use href="#rect"/></svg>矩形</button>
        <span class="sep"></span>
        <button class="tool tool-menu"><svg class="ic"><use href="#smart"/></svg>智能布置<svg class="caret caret-small"><use href="#caret"/></svg></button>
        <span class="sep sep-wide"></span>
        <button class="tool tool-menu"><svg class="ic"><use href="#slope"/></svg>三点定义斜垫层<svg class="caret"><use href="#caret"/></svg></button>
        <button class="tool"><svg class="ic"><use href="#lookup"/></svg>查看垫层顶标高</button>
        <span class="sep"></span>
        <button class="tool"><svg class="ic"><use href="#auto"/></svg>自动生成土方</button>
      </div>
      <div class="group group-tail">
        <span class="grip"></span>
        <button class="tool" aria-label="查看" disabled><svg class="ic"><use href="#ghost"/></svg></button>
      </div>
    </div>
    <div class="stage">
      <div class="edit-bar">
        <span class="grip-h"></span>
        <button class="vtool" aria-label="删除"><svg class="ic"><use href="#erase"/></svg></button>
        <span class="hsep"></span>
        <button class="vtool" aria-label="复制"><svg class="ic"><use href="#dup"/></svg></button>
        <button class="vtool" aria-label="镜像"><svg class="ic"><use href="#mirror"/></svg></button>
        <span class="hsep"></span>
        <button class="vtool" aria-label="移动"><svg class="ic"><use href="#move"/></svg></button>
        <button class="vtool" aria-label="旋转"><svg class="ic"><use href="#rotate"/></svg></button>
        <span class="hsep"></span>
        <button class="vtool"><svg class="ic"><use href="#extend"/></svg><span>延伸</span></button>
        <button class="vtool"><svg class="ic"><use href="#trim"/></svg><span>修剪</span></button>
        <span class="hsep"></span>
        <button class="vtool"><svg class="ic"><use href="#break"/></svg><span>打断</span><svg class="vcaret" viewBox="0 0 4 6"><path d="M4 0v6L0 3z"/></svg></button>
        <button class="vtool"><svg class="ic"><use href="#merge"/></svg><span>合并</span></button>
        <button class="vtool"><svg class="ic"><use href="#split"/></svg><span>分割</span></button>
        <span class="hsep"></span>
        <button class="vtool"><svg class="ic"><use href="#alignv"/></svg><span>对齐</span><svg class="vcaret" viewBox="0 0 4 6"><path d="M4 0v6L0 3z"/></svg></button>
        <button class="vtool"><svg class="ic"><use href="#offset"/></svg><span>偏移</span></button>
        <button class="vtool"><svg class="ic"><use href="#stretch"/></svg><span>拉伸</span></button>
        <span class="hsep"></span>
        <button class="vtool"><svg class="ic"><use href="#grippt"/></svg><span>设置夹点</span></button>
        <span class="hsep hsep-wide"></span>
        <button class="vtool"><svg class="ic"><use href="#chamfer"/></svg><span>倒角</span></button>
        <button class="vtool"><svg class="ic"><use href="#fillet"/></svg><span>圆角</span></button>
        <span class="hsep"></span>
      </div>
      <svg class="scene" role="img" aria-label="三维视图">
        <g transform="translate(-417 -86)">
          <g class="axis" shape-rendering="crispEdges">
            <circle cx="659" cy="580.500" r="13"/><circle cx="764.500" cy="593.500" r="13"/>
          </g>
          <text class="mark" x="661" y="586">1</text><text class="mark" x="766" y="599">2</text>
          <g shape-rendering="crispEdges">
            <path d="M671 254L872 279 864 384 853 446 797 596V485L814 438 713 425z" fill="#9f9fff"/>
            <path d="M713 425L815 438 797 486 695 474z" fill="#8080ff"/>
            <path d="M671 254L597 461 657 579 797 596V486L695 474 713 425z" fill="#6464c6"/>
            <path d="M728 431L813 442 797 485 711 475z" fill="#008040"/>
            <path d="M788 480h11l-1 7-12-3z" fill="#808000"/>
          </g>
          <g class="axis" shape-rendering="crispEdges">
            <path d="M626 370h3M609 416h3M592 462l5 2M576 509l48 6M690 378l41 6M673 424l41 6"/>
            <path d="M672 545l316 41M663 547l19-5M675 540l-11 28M769 560l18-5M779 553l-10 29M874 575l18-6M980 588l17-5M891 549l-16 46M996 562l-17 47"/>
            <circle cx="613" cy="368.500" r="13"/><circle cx="596.500" cy="414.500" r="13"/><circle cx="579" cy="461" r="13"/><circle cx="562.500" cy="507.500" r="13"/><circle cx="870" cy="607.500" r="13"/><circle cx="975.500" cy="621" r="13"/>
          </g>
          <g class="grid-lines" shape-rendering="crispEdges">
            <path d="M731 384l99 12M731 384l-34 90M714 430l99 13M853 399l194 25M836 445l194 25M819 491l194 26M802 538l194 25M1047 424l-51 138M941 411l-50 138"/>
          </g>
          <path d="M822 485l-5 12-3 49 6-16z" fill="none" stroke="#808000" shape-rendering="crispEdges"/>
          <g class="mark">
            <text x="613" y="374">D</text><text x="597" y="420">C</text><text x="580" y="466">B</text><text x="563" y="512">A</text>
            <text x="871" y="613">3</text><text x="976" y="626">4</text><text x="832" y="573">3000</text><text x="937" y="586">3000</text>
          </g>
          <path d="M471 845V816h-2l6-13 5 13h-2v29z" fill="#0080ff"/><path d="M475 803l5 13h-2v29h-3z" fill="#00bfff"/>
          <path d="M474 845V834l-1-1 5-6 3 4-4 4v10z" fill="#00e060"/>
          <path d="M462 797h8l-8 9h9" fill="none" stroke="#2458d8"/>
          <path d="M487 827l4 5 6-6M491 832l-3 5" fill="none" stroke="#18a030"/>
          <path d="M511 842l7 6M519 841l-7 7" stroke="#e00000"/>
        </g>
      </svg>
    </div>
  </main>
</div>

<svg class="notes" aria-hidden="true">
  <g fill="none" stroke="#f03c46" stroke-width="1">
    <ellipse cx="1096" cy="77" rx="36" ry="23"/><ellipse cx="770" cy="303" rx="34" ry="37"/><ellipse cx="761.500" cy="457" rx="18.500" ry="17.500"/><ellipse cx="63" cy="701" rx="33" ry="16"/>
  </g>
  <g fill="#ff3c3c">
    <path d="M97 701.300L737.800 460.400 736.900 457.500 748 459 740.400 467.200 739.400 464.600 97 702.700z"/>
    <path d="M761.400 454.500L1064.100 99.800 1062 98 1073 93 1069.600 104.600 1067.400 102.800 762.600 455.500z"/>
    <path d="M1063 92.800L771.600 299.800 769.700 297 764 308 776.100 306 774.200 303.400 1063 93.200z"/>
  </g>
</svg>
</body>
</html>
```
FILE: styles.css
```css
* { box-sizing: border-box; }

body {
  margin: 0;
  height: 100vh;
  display: flex;
  flex-direction: column;
  overflow: hidden;
  position: relative;
  background: #f0f0f0;
  color: #000;
  font: 12px/16px "Noto Sans CJK SC", sans-serif;
}

button, input, select { font: inherit; color: inherit; }
button { border: 0; padding: 0; background: none; }
a { color: inherit; text-decoration: none; }
.sprite { position: absolute; width: 0; height: 0; }
.ic { width: 16px; height: 16px; flex: none; display: block; }

/* toolbars */
.bar { display: flex; flex: none; white-space: nowrap; overflow: hidden; }
.bar-main { height: 28px; padding-bottom: 2px; background: #fff; border-bottom: 1px solid #c8c8c8; }
.bar-sub { height: 29px; border-bottom: 1px solid #c6c6c6; box-shadow: inset 0 1px #fff; }
.bar-main .tool { height: 24px; }
.group { display: flex; align-items: center; flex: none; }
.group-end { border-right: 1px solid #cdcdcd; }
.bar-main .group-end { padding-right: 2px; }
.group-far { margin-left: 11px; }
.group-tail { margin-left: 62px; }
.grip {
  width: 3px;
  height: 22px;
  margin: 0 4px 0 1px;
  background: repeating-linear-gradient(#b0b0b0 0 2px, transparent 2px 4px);
}
.grip-near { margin: 0 3px; }
.sep { width: 1px; height: 20px; margin: 0 2px 0 3px; background: #8a8a8a; }
.sep-flush { margin: 0 3px 0 1px; }
.sep-wide { margin: 0 3px 0 5px; }
.tool { display: flex; align-items: center; gap: 4px; height: 22px; padding: 0 3px 0 4px; }
.tool-first { padding-left: 0; }
.tool-menu { padding-right: 0; }
.tool:disabled { color: #8c8c8c; }
.on { background: #c1dcf3; border: 1px solid #90c8f6; padding: 0 2px 0 3px; }
.caret { width: 7px; height: 4px; flex: none; }
.caret-tight { margin-left: -1px; }
.caret-small { width: 5px; height: 3px; margin-left: -1px; }
.caret-flush { margin-left: 1px; }
.faded { opacity: .5; }

.combo {
  appearance: none;
  width: 68px;
  height: 21px;
  margin-right: 4px;
  padding: 0 14px 0 2px;
  border: 0;
  border-radius: 0;
  background: #fff url("data:image/svg+xml,%3Csvg xmlns='http://www.w3.org/2000/svg' width='13' height='21'%3E%3Crect x='.5' y='.5' width='12' height='20' fill='%23e1e1e1' stroke='%23adadad'/%3E%3Cpath d='M3 9l3.500 3.500L10 9' fill='none' stroke='%23444'/%3E%3C/svg%3E") right center no-repeat;
}
.combo-short { width: 56px; }
.combo-wide { width: 79px; padding-left: 3px; margin-right: 1px; }
.combo-blank { width: 53px; margin: 0 2px 0 1px; }
.bar-sub .grip + .combo { margin-left: 2px; }

/* work area */
.work { display: flex; flex: 1; min-height: 0; }
.nav { width: 188px; flex: none; padding-top: 1px; display: flex; flex-direction: column; }
.side { width: 195px; margin-left: 4px; flex: none; padding-top: 1px; display: flex; flex-direction: column; }
.main { flex: 1; min-width: 0; margin-left: 3px; display: flex; flex-direction: column; }

.title {
  display: flex;
  align-items: center;
  flex: none;
  height: 15px;
  margin: 0 1px 0 0;
  padding-right: 4px;
  border: 1px solid #7c7c7c;
  border-radius: 2px;
  font-size: 13px;
  font-weight: 400;
  line-height: 13px;
}
.title span { flex: 1; padding-bottom: 2px; }
.title button { display: flex; margin-left: 9px; }
.title-active { background: #0055e5; border-color: #0055e5; border-radius: 0; color: #fff; margin: 0; }
.title-second { margin-top: 6px; }
.pin { width: 9px; height: 10px; }
.close { width: 9px; height: 9px; }

.stack { flex: none; height: 23px; margin-right: 1px; padding: 2px 10px 0 0; border: 1px solid #a8a8a8; border-left: 0; border-top-color: #c4c4c4; }
.stack + .stack { border-top: 0; }
.fold { display: flex; flex: none; gap: 9px; height: 27px; padding-top: 6px; margin-right: 1px; background: #fff; border-right: 1px solid #c8c8c8; }
.fold button { display: flex; width: 14px; height: 14px; }
.fold button:first-child { margin-left: -3px; }
.fold svg { width: 14px; height: 14px; }

/* component tree */
.tree, .tree ul { list-style: none; margin: 0; padding: 0; }
.tree { flex: 1; min-height: 0; overflow: hidden; padding-top: 1px; margin-right: 1px; background: #fff; border-top: 1px solid #828790; border-right: 1px solid #828790; }
.tree a { display: flex; align-items: center; height: 16px; }
.tree a .ic { margin-right: 4px; }
.arrow { width: 8px; height: 10px; margin-right: 4px; }
.dots { width: 3px; height: 1px; background: repeating-linear-gradient(to right, #808080 0 1px, transparent 1px 2px); }
.tree ul { margin-left: 4px; border-left: 1px dotted #808080; }
.tree ul li { display: flex; height: 16px; padding-left: 18px; }
.tree ul a { padding: 0 8px 0 2px; }
.branch {
  width: 9px;
  height: 16px;
  border-left: 1px dotted #808080;
  background: repeating-linear-gradient(to right, #808080 0 1px, transparent 1px 2px) 0 8px / 100% 1px no-repeat;
}
.tree ul li:last-child .branch { height: 9px; }
.tree .current { background: #d9d9d9; }

/* component list */
.list-tools { display: flex; align-items: center; flex: none; gap: 2px; height: 28px; padding-left: 2px; background: #fff; }
.search { display: flex; align-items: center; flex: none; height: 26px; padding-left: 2px; }
.search input { width: 168px; height: 25px; padding: 0 2px 3px; border: 1px solid #7a7a7a; border-radius: 0; background: #fff; }
.search input::placeholder { color: #7a7a7a; opacity: 1; }
.search button { margin-left: 4px; }
.box { margin: 0 1px 0 2px; background: #fff; border: 1px solid #a0a0a0; border-right-width: 2px; }
.box-list { flex: none; height: 71px; padding: 2px 1px; border-bottom-width: 2px; }
.box-props { flex: 1; min-height: 0; margin-top: 2px; padding: 0 1px; border-bottom: 0; }
table { border-collapse: collapse; table-layout: fixed; }
td, th { height: 21px; padding: 0 0 0 2px; border: solid #c0c0c0; border-width: 0 1px 1px 0; font-weight: 400; text-align: left; line-height: 16px; white-space: nowrap; overflow: hidden; }
th { background: linear-gradient(#fff, #efefef); }
.hot { background: linear-gradient(#fbdc9c, #f2bf5f); color: #600060; }
.parts { width: 100%; }
.parts .corner { width: 26px; }
.parts .hot { text-align: center; }
.parts td { height: 19px; }
.parts .num { background: #ffd291; color: #600060; text-align: center; }
.parts .picked { padding-left: 19px; }
.picked { background: #d9eaf8; }
.props { width: 179px; }
.c1 { width: 84px; }
.c2 { width: 64px; }
.key { padding-left: 20px; color: #0000f0; }
.plain { color: #000; }
.dim { color: #808080; }
.sum td { height: 19px; }
.more button { width: 13px; height: 13px; margin-right: 5px; border: 1px solid #a0a0a0; line-height: 10px; vertical-align: 1px; }
td input { appearance: none; display: block; width: 13px; height: 13px; margin: 0; border: 1px solid #333; background: #fff; }

/* drawing stage */
.stage { display: flex; flex: 1; min-height: 0; }
.edit-bar { display: flex; flex-direction: column; align-items: center; flex: none; width: 27px; border-right: 1px solid #fff; overflow: hidden; }
.grip-h { flex: none; width: 24px; height: 2px; margin: 2px 0; background: repeating-linear-gradient(to right, #b0b0b0 0 2px, transparent 2px 4px); }
.hsep { flex: none; width: 19px; height: 1px; margin: 2px 0; background: #808080; }
.hsep-wide { margin-bottom: 4px; }
.vtool { display: flex; flex-direction: column; align-items: center; flex: none; gap: 3px; padding: 4px 0 3px; line-height: 12px; }
.vtool span { width: 12px; overflow-wrap: anywhere; }
.vcaret { width: 4px; height: 6px; }
.scene { flex: 1; min-width: 0; height: 100%; background: #000; }
.axis { fill: none; stroke: #008000; }
.grid-lines { fill: none; stroke: #f00; }
.mark { fill: #e4e4e4; font: 15px "Liberation Sans", sans-serif; text-anchor: middle; }

.notes { position: absolute; inset: 0; width: 100%; height: 100%; pointer-events: none; }
```
